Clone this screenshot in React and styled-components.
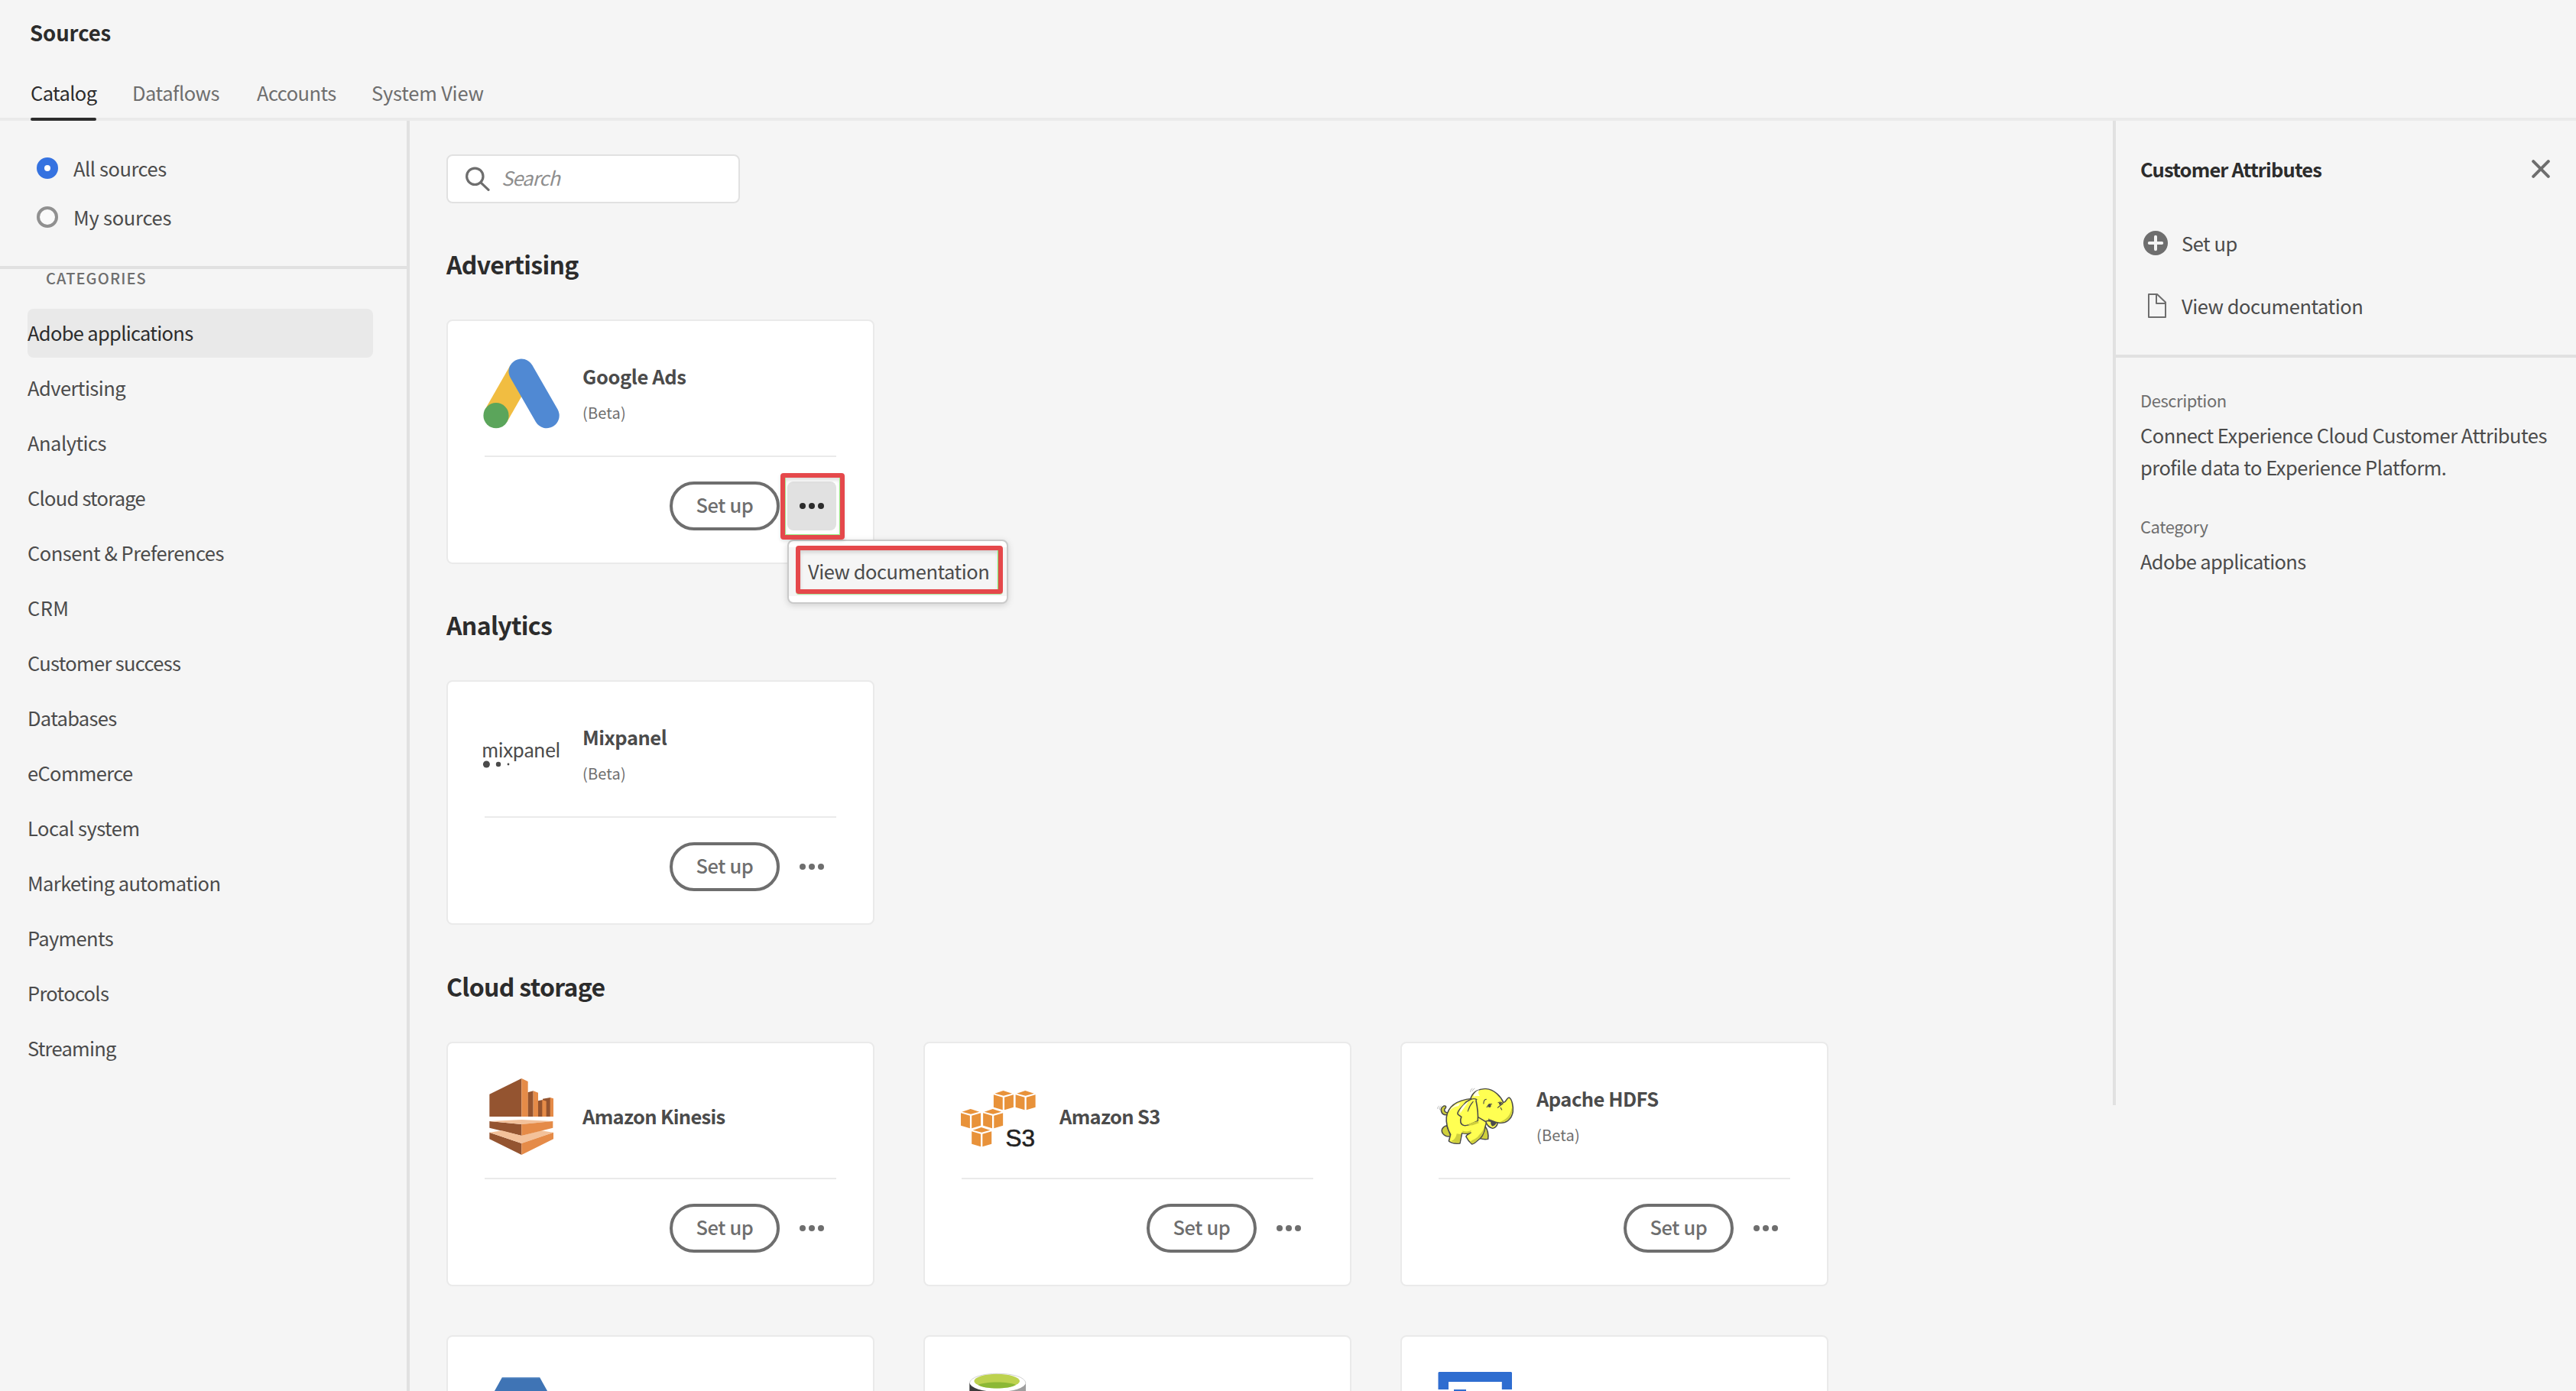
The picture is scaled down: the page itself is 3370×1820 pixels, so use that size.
import React from 'react';
import styled, { createGlobalStyle } from 'styled-components';

const GlobalStyle = createGlobalStyle`
  *, *::before, *::after { box-sizing: border-box; }
  body {
    margin: 0;
    background: #f5f5f5;
    color: #4b4b4b;
    font-family: "Noto Sans CJK SC", "Noto Sans", sans-serif;
    font-size: 25.5px;
    overflow: hidden;
  }
  h1, h2, h3, p, ul { margin: 0; padding: 0; font-size: inherit; font-weight: inherit; }
  ul { list-style: none; }
  button { font: inherit; color: inherit; background: none; border: 0; padding: 0; }
`;

const Page = styled.div`
  display: flex;
  flex-direction: column;
  height: 1820px;
  overflow: hidden;
`;

const Header = styled.header`
  flex: none;
  padding-top: 22px;
`;

const PageTitle = styled.h1`
  padding-left: 39px;
  font-size: 27.5px;
  font-weight: 700;
  line-height: 40px;
  letter-spacing: -0.1px;
  color: #2c2c2c;
`;

const Tabs = styled.nav`
  display: flex;
  gap: 47px;
  height: 70px;
  margin-top: 26px;
  padding-left: 40px;
  box-shadow: inset 0 -4px #eaeaea;
`;

const Tab = styled.div`
  width: ${(p) => p.$width}px;
  line-height: 66px;
  white-space: nowrap;
  letter-spacing: ${(p) => p.$tracking}px;
  color: ${(p) => (p.$active ? '#2c2c2c' : '#6e6e6e')};

  &::after {
    content: '';
    display: block;
    height: 4px;
    border-radius: 2px;
    background: ${(p) => (p.$active ? '#2c2c2c' : 'transparent')};
  }
`;

const Body = styled.div`
  flex: 1;
  display: flex;
  min-height: 0;
`;

const Sidebar = styled.aside`
  flex: none;
  width: 536px;
  border-right: 4px solid #e1e1e1;
`;

const RadioGroup = styled.div`
  height: 194px;
  padding: 30px 0 0 48px;
  border-bottom: 4px solid #e1e1e1;
`;

const RadioRow = styled.label`
  display: flex;
  align-items: center;
  gap: 20px;
  height: 64px;
  letter-spacing: ${(p) => p.$tracking}px;
`;

const RadioLabel = styled.span`
  padding-bottom: 2px;
`;

const RadioDot = styled.span`
  width: 28px;
  height: 28px;
  border-radius: 50%;
  border: ${(p) => (p.$checked ? '10px solid #3572e0' : '4px solid #909090')};
  background: ${(p) => (p.$checked ? '#fff' : '#fafafa')};
`;

const GroupLabel = styled.div`
  margin-bottom: 28px;
  padding-left: 60px;
  font-size: 20px;
  font-weight: 500;
  line-height: 24px;
  letter-spacing: 1.1px;
  color: #6e6e6e;
`;

const CategoryList = styled.ul`
  display: flex;
  flex-direction: column;
  gap: 8px;
  padding: 0 44px 0 36px;
`;

const CategoryItem = styled.li`
  display: flex;
  align-items: center;
  height: 64px;
  padding-bottom: 4px;
  border-radius: 8px;
  letter-spacing: ${(p) => p.$tracking}px;
  background: ${(p) => (p.$selected ? '#e9e9e9' : 'transparent')};
  color: ${(p) => (p.$selected ? '#2c2c2c' : '#4b4b4b')};
`;

const Main = styled.main`
  flex: 1;
  min-width: 0;
  padding: 44px 0 0 48px;
`;

const SearchField = styled.div`
  display: flex;
  align-items: center;
  gap: 15px;
  width: 384px;
  height: 64px;
  margin-bottom: -0.6px;
  padding-left: 23px;
  border: 2px solid #e1e1e1;
  border-radius: 8px;
  background: #fff;
`;

const Placeholder = styled.span`
  padding-bottom: 6px;
  font-style: italic;
  letter-spacing: -0.9px;
  color: #8e8e8e;
`;

const Section = styled.section`
  padding-top: 57.5px;
`;

const SectionTitle = styled.h2`
  margin-bottom: 51px;
  font-size: 32px;
  font-weight: 700;
  line-height: 44px;
  letter-spacing: -0.68px;
  color: #2c2c2c;
`;

const CardGrid = styled.div`
  display: grid;
  grid-template-columns: repeat(3, 560px);
  gap: 64px;
`;

const CardBox = styled.article`
  height: 320px;
  padding: 0 48px;
  border: 2px solid #eaeaea;
  border-radius: 8px;
  background: #fff;
`;

const CardHead = styled.div`
  display: flex;
  align-items: center;
  gap: 30px;
  height: 178px;
  padding-top: 16px;
  border-bottom: 2px solid #eaeaea;
`;

const LogoSlot = styled.div`
  width: 100px;
  height: 100px;
  margin-left: -2px;

  svg { display: block; }
`;

const CardText = styled.div`
  display: flex;
  flex-direction: column;
  gap: 18px;
  padding-bottom: 2px;
`;

const CardTitle = styled.h3`
  font-weight: 700;
  line-height: 32px;
  letter-spacing: ${(p) => p.$tracking}px;
`;

const CardNote = styled.div`
  font-size: 20px;
  line-height: 28px;
  letter-spacing: 0.2px;
  color: #6e6e6e;
`;

const CardActions = styled.div`
  display: flex;
  justify-content: flex-end;
  gap: 10px;
  padding-top: 32px;
`;

const SetUpButton = styled.button`
  display: flex;
  align-items: center;
  justify-content: center;
  width: 144px;
  height: 64px;
  padding-bottom: 5px;
  border: 4px solid #6e6e6e;
  border-radius: 32px;
  font-weight: 500;
  letter-spacing: -0.4px;
  color: #6e6e6e;
`;

const MoreWrap = styled.div`
  position: relative;
`;

const MoreButton = styled.button`
  display: flex;
  align-items: center;
  justify-content: center;
  gap: 4px;
  width: 64px;
  height: 64px;
  border-radius: 8px;
  background: ${(p) => (p.$open ? '#e1e1e1' : 'transparent')};
  color: ${(p) => (p.$open ? '#2c2c2c' : '#6e6e6e')};
`;

const Dot = styled.span`
  width: 8px;
  height: 8px;
  border-radius: 50%;
  background: currentColor;
`;

const Popover = styled.div`
  position: absolute;
  z-index: 2;
  top: 76px;
  left: 0;
  width: 289px;
  padding: 8px 0;
  border: 2px solid #cacaca;
  border-radius: 8px;
  background: #fff;
  box-shadow: 0 2px 8px rgba(0, 0, 0, 0.15);
`;

const MenuItem = styled.div`
  display: flex;
  align-items: center;
  height: 64px;
  padding: 0 0 2px 25px;
  background: #f5f5f5;
  white-space: nowrap;
  letter-spacing: -0.47px;
`;

const Highlight = styled.div`
  position: absolute;
  z-index: 3;
  top: ${(p) => p.$top}px;
  left: ${(p) => p.$left}px;
  width: ${(p) => p.$width}px;
  height: ${(p) => p.$height}px;
  border: 6px solid #e5484b;
  border-radius: 4px;
  box-shadow: ${(p) =>
    p.$edge === 'inner'
      ? 'inset 1px 0 #a5ea94, inset -1px -1px #96ee82, inset 0 3px 5px rgba(0,0,0,.14), 0 2px 4px rgba(0,0,0,.12)'
      : '0 1px #a8e79a, inset -1px 0 #7df06a, inset 0 3px 5px rgba(0,0,0,.14)'};
`;

const Panel = styled.aside`
  flex: none;
  width: 606px;
  height: 1288px;
  border-left: 4px solid #e1e1e1;
`;

const PanelTop = styled.div`
  height: 310px;
  padding: 43px 34px 0 32px;
  border-bottom: 4px solid #e1e1e1;
`;

const PanelHeader = styled.div`
  display: flex;
  align-items: center;
  justify-content: space-between;
  margin-bottom: 57px;
`;

const PanelTitle = styled.h2`
  font-weight: 700;
  line-height: 40px;
  letter-spacing: -0.85px;
  color: #2c2c2c;
`;

const PanelAction = styled.div`
  display: flex;
  align-items: center;
  gap: 18px;
  height: 40px;
  margin-bottom: 42px;
  padding-left: 4px;
  letter-spacing: -0.47px;
`;

const ActionLabel = styled.span`
  padding-bottom: 2px;
`;

const Details = styled.div`
  padding: 40px 30px 0 32px;
`;

const DetailLabel = styled.div`
  margin-bottom: 10px;
  font-size: 22px;
  line-height: 30px;
  letter-spacing: -0.45px;
  color: #6e6e6e;
`;

const DetailValue = styled.p`
  margin-bottom: 41px;
  line-height: 42px;
  letter-spacing: ${(p) => p.$tracking}px;
`;

const SearchIcon = () => (
  <svg width="32" height="32" viewBox="0 0 32 32" fill="none" stroke="#6e6e6e" strokeWidth="3.2" strokeLinecap="round">
    <circle cx="12.3" cy="12.8" r="10.7" />
    <path d="M20 20.8 30 30.4" />
  </svg>
);

const CloseIcon = () => (
  <svg width="24" height="24" viewBox="0 0 24 24" stroke="#6e6e6e" strokeWidth="4" strokeLinecap="round">
    <path d="M2.2 2.2 21.8 21.8M21.8 2.2 2.2 21.8" />
  </svg>
);

const AddIcon = () => (
  <svg width="32" height="32" viewBox="0 0 32 32">
    <circle cx="16" cy="16" r="16" fill="#6e6e6e" />
    <path d="M16 7.8V24.2M7.8 16H24.2" stroke="#f5f5f5" strokeWidth="4" strokeLinecap="round" />
  </svg>
);

const FileIcon = () => (
  <svg width="32" height="32" viewBox="0 0 32 32" fill="none" stroke="#6e6e6e" strokeWidth="2" strokeLinejoin="round">
    <path d="M7 1H18L29 11.5V31H7Z" />
    <path d="M17 1V13H29" />
  </svg>
);

const GoogleAdsLogo = () => (
  <svg width="100" height="100" viewBox="0 0 100 100">
    <path d="M50 20 17 77.7" stroke="#f1bd41" strokeWidth="33" />
    <circle cx="17" cy="77.7" r="16.6" fill="#5ba55b" />
    <path d="M50 20 83.2 77.7" stroke="#5089d3" strokeWidth="33" strokeLinecap="round" />
  </svg>
);

const MixpanelLogo = () => (
  <svg width="100" height="100" viewBox="0 0 100 100" overflow="visible" fill="#4b4b4b">
    <text x="-1.5" y="53.4" fontFamily="Lato, sans-serif" fontSize="26" textLength="102.5">mixpanel</text>
    <circle cx="4.4" cy="62" r="4.5" />
    <circle cx="20" cy="62" r="3.2" />
    <circle cx="33" cy="62" r="1.4" />
  </svg>
);

const KinesisLogo = () => (
  <svg width="100" height="100" viewBox="96 93 300 300">
    <path fill="#945430" d="M121 155 247 93V243H121ZM271 148 293 142V243H271ZM312 181 330 177V243H312ZM330 173 360 168V243H330ZM121 261 247 273V318L121 287ZM121 305 247 348V393L121 331Z" />
    <path fill="#f3c19a" d="M121 261 247 255 371 261 247 273ZM121 305 170 298 247 318 324 298 371 305 247 348Z" />
    <path fill="#e58b48" d="M247 93 272 105V243H247ZM293 142 312 149V243H293ZM328 177 344 182V243H328ZM359 168 372 172V243H359ZM247 273 370 261V287L247 318ZM247 348 372 305V331L247 393Z" />
  </svg>
);

const Cube = ({ x, y }) => (
  <path
    transform={`translate(${x} ${y})`}
    d="M4 11 33 0 63 11 34 20ZM0 16 31 26V76L0 65ZM37 26 68 16V65L37 76Z"
  />
);

const S3Logo = () => (
  <svg width="100" height="100" viewBox="146.3 153 261.3 300" preserveAspectRatio="none">
    <g fill="#e8923a">
      <Cube x={261} y={201} />
      <Cube x={336} y={201} />
      <Cube x={149} y={273} />
      <Cube x={225} y={273} />
      <Cube x={186} y={345} />
    </g>
    <text
      transform="translate(301.5 418.500) scale(2.613 3)"
      fontFamily="Liberation Sans, Arial, sans-serif"
      fontSize="31.5"
      fill="#222"
      stroke="#222"
      strokeWidth="0.6"
    >
      S3
    </text>
  </svg>
);

const HadoopLogo = () => (
  <svg width="100" height="100" viewBox="156.8 153 261.3 300" preserveAspectRatio="none" overflow="visible" strokeLinejoin="round" strokeLinecap="round">
    <g stroke="#4b4b4b" strokeWidth="4.2">
      <path fill="#cfcf3c" d="M190 296C170 298 164 270 180 261C190 258 188 270 183 272C180 280 185 288 193 287" />
      <path fill="#cfcf3c" d="M190 338C176 342 168 356 177 370C184 380 194 383 204 380Z" />
      <path fill="#cfcf3c" d="M322 342C330 355 333 372 331 391C322 393 312 392 302 388Z" />
      <path fill="#ffff52" d="M276 232C225 238 194 262 189 305C187 330 194 355 203 373L197 399C205 407 220 410 235 408C237 395 240 380 242 368C252 372 262 370 272 366C262 374 255 376 256 382C261 394 268 404 276 411C284 410 290 402 296 396C308 388 318 370 322 340L330 310Z" />
      <path fill="#ffff52" d="M322 318C326 335 334 346 347 349C358 346 363 338 364 326Z" />
      <path fill="#4b4b4b" strokeWidth="2" d="M342 317C340 327 341 336 346 340C352 339 359 333 360 325Z" />
      <path fill="#ffff52" d="M272 230C280 206 300 192 324 194C352 196 374 222 384 248C394 246 393 230 403 228C413 234 418 262 416 284C412 314 392 332 366 327C352 324 345 318 338 316L322 322L290 300Z" />
      <path fill="#ffff52" d="M292 236C282 228 262 236 248 256C232 276 222 290 230 296L240 304C234 320 236 334 250 338C268 340 284 324 296 320C298 296 294 262 290 240" />
    </g>
    <path fill="#cfcf3c" d="M205 398C214 398 222 384 224 370L238 372C237 386 236 396 233 405C222 407 212 404 205 398ZM270 403C280 390 292 392 300 376C310 366 316 352 318 342C320 368 306 384 294 394C286 404 280 410 276 408ZM370 325C392 316 408 300 412 268C418 300 398 328 370 325ZM262 336C276 326 288 322 296 322L300 328C288 332 276 342 262 336ZM244 358C254 364 262 362 274 356L270 366C260 370 252 370 244 366Z" />
    <path fill="#fff" opacity=".85" d="M282 216C288 204 296 199 302 198C296 206 298 214 303 222C296 222 290 222 282 224ZM236 250C220 254 204 266 198 284C206 272 214 264 230 262ZM236 276C242 262 254 250 264 244C254 262 244 276 236 290Z" />
    <path
      fill="none"
      stroke="#4b4b4b"
      strokeWidth="3"
      d="M262 282C266 266 272 254 280 244M316 252C316 242 319 236 325 235M327 266C332 256 338 252 344 254M366 248C372 244 376 246 381 250M364 268C370 262 376 256 382 252M334 312C334 320 338 322 344 320M374 268L378 276"
    />
    <ellipse cx="336" cy="260" rx="5.5" ry="7" fill="#4b4b4b" />
    <ellipse cx="373" cy="252" rx="5" ry="5.5" fill="#4b4b4b" />
    <path fill="none" stroke="#888" strokeWidth="1.6" d="M271 206C271 200 273 195 277 193M278 202C279 197 281 195 285 193M159 272C158 268 160 264 163 262M166 276C164 270 166 265 170 262" />
  </svg>
);

const HexagonLogo = () => (
  <svg width="100" height="100" viewBox="0 0 100 100">
    <path fill="#3f74b5" d="M25 7H74L98 50 74 93H25L1 50Z" />
    <path fill="#6b97cb" d="M25 7H74V8.2H25Z" />
  </svg>
);

const BarrelLogo = () => (
  <svg width="100" height="100" viewBox="0 0 100 100">
    <path fill="#3b3b3b" d="M12.3 14H49V98H12.3Z" />
    <path fill="#9e9e9e" d="M49 14H86V98H49Z" />
    <ellipse cx="49.2" cy="14" rx="36.8" ry="12" fill="#fff" />
    <path d="M12.4 15C13 -2 85.4 -2 86 15" fill="none" stroke="#c8c8c8" strokeWidth="0.8" />
    <ellipse cx="48.2" cy="12" rx="29.8" ry="9.3" fill="#bdd24f" />
    <path fill="#8cb835" d="M23.5 17C32 12.200 64.5 12.200 73 17C64 23 32 23 23.5 17Z" />
  </svg>
);

const FrameLogo = () => (
  <svg width="100" height="100" viewBox="0 0 100 100">
    <path fill="#2f6dd0" d="M2.5 0H97L98 1V23H84.8V13H15V23H1.5V1ZM22 23H38V40H22Z" />
  </svg>
);

const tabs = [
  { label: 'Catalog', width: 86, tracking: -0.6, active: true },
  { label: 'Dataflows', width: 116, tracking: -0.45 },
  { label: 'Accounts', width: 103, tracking: -0.55 },
  { label: 'System View', width: 150, tracking: -0.2 },
];

const categories = [
  { label: 'Adobe applications', tracking: -0.69, selected: true },
  { label: 'Advertising', tracking: -0.54 },
  { label: 'Analytics', tracking: -0.5 },
  { label: 'Cloud storage', tracking: -0.75 },
  { label: 'Consent & Preferences', tracking: -0.48 },
  { label: 'CRM', tracking: 0.4 },
  { label: 'Customer success', tracking: -0.68 },
  { label: 'Databases', tracking: -0.68 },
  { label: 'eCommerce', tracking: -0.65 },
  { label: 'Local system', tracking: -0.5 },
  { label: 'Marketing automation', tracking: -0.6 },
  { label: 'Payments', tracking: -0.65 },
  { label: 'Protocols', tracking: -0.7 },
  { label: 'Streaming', tracking: -0.75 },
];

const sections = [
  { title: 'Advertising', cards: [{ name: 'Google Ads', tracking: -0.4, beta: true, Logo: GoogleAdsLogo, open: true }] },
  { title: 'Analytics', cards: [{ name: 'Mixpanel', tracking: -0.5, beta: true, Logo: MixpanelLogo }] },
  {
    title: 'Cloud storage',
    cards: [
      { name: 'Amazon Kinesis', tracking: -0.7, Logo: KinesisLogo },
      { name: 'Amazon S3', tracking: -0.7, Logo: S3Logo },
      { name: 'Apache HDFS', tracking: -0.53, beta: true, Logo: HadoopLogo },
      { Logo: HexagonLogo },
      { Logo: BarrelLogo },
      { Logo: FrameLogo },
    ],
  },
];

function Card({ name, tracking, beta, Logo, open }) {
  return (
    <CardBox>
      <CardHead>
        <LogoSlot><Logo /></LogoSlot>
        {name && (
          <CardText>
            <CardTitle $tracking={tracking}>{name}</CardTitle>
            {beta && <CardNote>(Beta)</CardNote>}
          </CardText>
        )}
      </CardHead>
      {name && (
        <CardActions>
          <SetUpButton>Set up</SetUpButton>
          <MoreWrap>
            <MoreButton $open={open} aria-label="More actions"><Dot /><Dot /><Dot /></MoreButton>
            {open && (
              <>
                <Popover>
                  <MenuItem>View documentation</MenuItem>
                  <Highlight $top={6} $left={9} $width={271} $height={63} $edge="outer" />
                </Popover>
                <Highlight $top={-11} $left={-9} $width={84} $height={87} $edge="inner" />
              </>
            )}
          </MoreWrap>
        </CardActions>
      )}
    </CardBox>
  );
}

export default function App() {
  return (
    <>
      <GlobalStyle />
      <Page>
        <Header>
          <PageTitle>Sources</PageTitle>
          <Tabs>
            {tabs.map((t) => (
              <Tab key={t.label} $width={t.width} $tracking={t.tracking} $active={t.active}>{t.label}</Tab>
            ))}
          </Tabs>
        </Header>
        <Body>
          <Sidebar>
            <RadioGroup>
              <RadioRow $tracking={-0.45}><RadioDot $checked /><RadioLabel>All sources</RadioLabel></RadioRow>
              <RadioRow $tracking={-0.25}><RadioDot /><RadioLabel>My sources</RadioLabel></RadioRow>
            </RadioGroup>
            <GroupLabel>CATEGORIES</GroupLabel>
            <CategoryList>
              {categories.map((c) => (
                <CategoryItem key={c.label} $selected={c.selected} $tracking={c.tracking}>{c.label}</CategoryItem>
              ))}
            </CategoryList>
          </Sidebar>
          <Main>
            <SearchField>
              <SearchIcon />
              <Placeholder>Search</Placeholder>
            </SearchField>
            {sections.map((s) => (
              <Section key={s.title}>
                <SectionTitle>{s.title}</SectionTitle>
                <CardGrid>
                  {s.cards.map((c, i) => <Card key={i} {...c} />)}
                </CardGrid>
              </Section>
            ))}
          </Main>
          <Panel>
            <PanelTop>
              <PanelHeader>
                <PanelTitle>Customer Attributes</PanelTitle>
                <CloseIcon />
              </PanelHeader>
              <PanelAction><AddIcon /><ActionLabel>Set up</ActionLabel></PanelAction>
              <PanelAction><FileIcon /><ActionLabel>View documentation</ActionLabel></PanelAction>
            </PanelTop>
            <Details>
              <DetailLabel>Description</DetailLabel>
              <DetailValue $tracking={-0.52}>
                Connect Experience Cloud Customer Attributes profile data to Experience Platform.
              </DetailValue>
              <DetailLabel>Category</DetailLabel>
              <DetailValue $tracking={-0.69}>Adobe applications</DetailValue>
            </Details>
          </Panel>
        </Body>
      </Page>
    </>
  );
}
